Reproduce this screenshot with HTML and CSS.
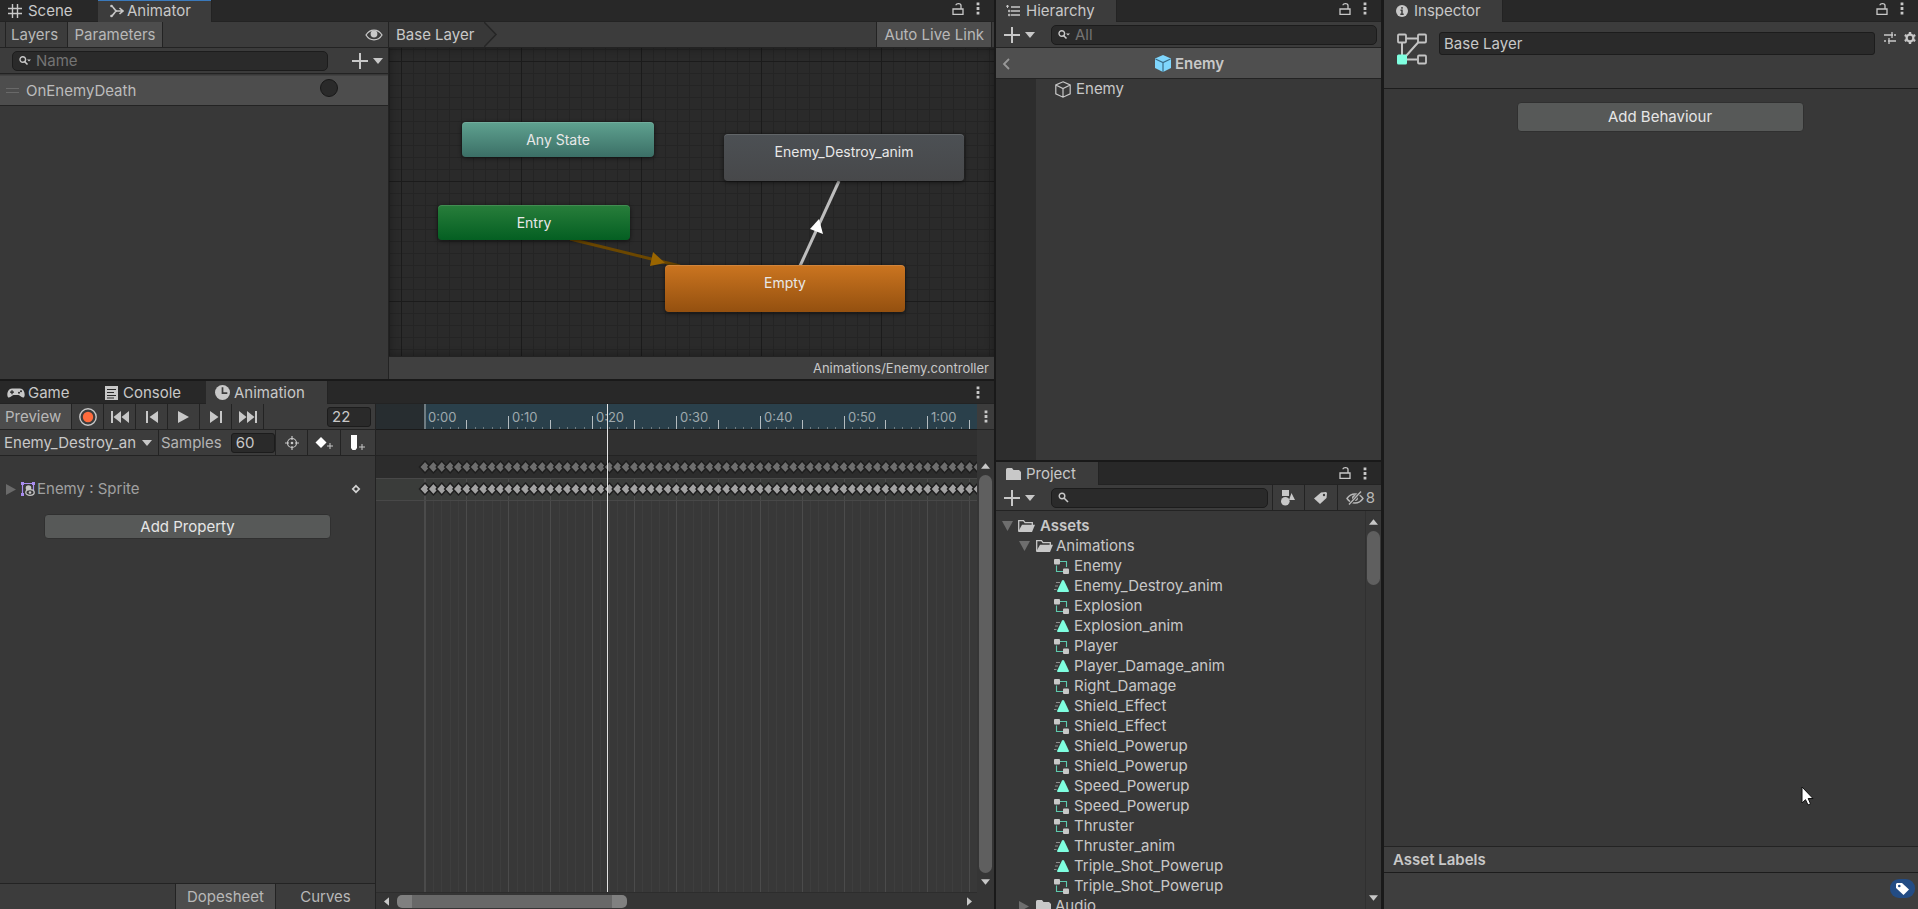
FILE: index.html
```html
<!DOCTYPE html>
<html lang="en">
<head>
  <meta charset="UTF-8" />
  <meta name="viewport" content="width=device-width, initial-scale=1.0"/>
  <title>Animator - Base Layer</title>
  <link rel="stylesheet" href="styles.css">
</head>
<body>
<svg class="defs" width="0" height="0">
  <symbol id="i-grid" viewBox="0 0 14 14"><path d="M4.5 0v14M9.5 0v14M0 4.5h14M0 9.5h14" stroke="currentColor" stroke-width="1.4" fill="none"/></symbol>
  <symbol id="i-animator" viewBox="0 0 14 14"><path d="M1 2c3 0 3 5 6 5h5M1 12c3 0 3-5 6-5M9.5 4l3.500 3-3.500 3" stroke="currentColor" stroke-width="1.600" fill="none"/><circle cx="1.500" cy="2" r="1.300" fill="currentColor"/><circle cx="1.500" cy="12" r="1.300" fill="currentColor"/></symbol>
  <symbol id="i-lock" viewBox="0 0 12 14"><path d="M1 7h10v5.300H1zM9 7V3.500C9 1 4 1 4 3.300" stroke="currentColor" stroke-width="1.300" fill="none"/></symbol>
  <symbol id="i-dots" viewBox="0 0 4 14"><path d="M.5.5h3v3h-3zM.5 5.500h3v3h-3zM.5 10.500h3v3h-3z" fill="currentColor"/></symbol>
  <symbol id="i-eye" viewBox="0 0 18 12"><path d="M1 6c4-6.500 12-6.500 16 0-4 6.500-12 6.500-16 0z" stroke="currentColor" stroke-width="1.300" fill="none"/><circle cx="9" cy="5" r="3.400" fill="currentColor"/></symbol>
  <symbol id="i-search" viewBox="0 0 12 12"><circle cx="4" cy="4" r="2.800" stroke="currentColor" stroke-width="1.400" fill="none"/><path d="M6 6l4 4" stroke="currentColor" stroke-width="1.600"/></symbol>
  <symbol id="i-search-menu" viewBox="0 0 12 12"><circle cx="3.800" cy="4.500" r="2.800" stroke="currentColor" stroke-width="1.400" fill="none"/><path d="M5.500 6.500l3 3" stroke="currentColor" stroke-width="1.600"/><path d="M8 4.500h4l-2 2z" fill="currentColor"/></symbol>
  <symbol id="i-plus" viewBox="0 0 16 16"><path d="M8 0v16M0 8h16" stroke="currentColor" stroke-width="2"/></symbol>
  <symbol id="i-down" viewBox="0 0 10 6"><path d="M0 0h10L5 6z" fill="currentColor"/></symbol>
  <symbol id="i-up" viewBox="0 0 10 6"><path d="M0 6h10L5 0z" fill="currentColor"/></symbol>
  <symbol id="i-left" viewBox="0 0 6 10"><path d="M6 0v10L0 5z" fill="currentColor"/></symbol>
  <symbol id="i-right" viewBox="0 0 6 10"><path d="M0 0v10l6-5z" fill="currentColor"/></symbol>
  <symbol id="i-unfolded" viewBox="0 0 11 10"><path d="M0 0h11L5.500 10z" fill="currentColor"/></symbol>
  <symbol id="i-folded" viewBox="0 0 10 11"><path d="M0 0v11l10-5.500z" fill="currentColor"/></symbol>
  <symbol id="i-game" viewBox="0 0 18 12"><path d="M5 1.500h8c5 0 6 9 3 9-2 0-3-2.500-4.500-2.500h-5C5 8 4 10.500 2 10.500c-3 0-2-9 3-9z" fill="currentColor"/><path d="M5 3.200v4M3 5.200h4" stroke="#282828" stroke-width="1.300"/><circle cx="12" cy="5.800" r="1" fill="#282828"/><circle cx="14" cy="4.200" r="1" fill="#282828"/></symbol>
  <symbol id="i-console" viewBox="0 0 13 14"><path d="M0 0h13v14H0z" fill="currentColor"/><path d="M2 3.500h9M2 6.500h7M2 9.500h9M2 12h7" stroke="#282828" stroke-width="1.200"/></symbol>
  <symbol id="i-clock" viewBox="0 0 14 14"><circle cx="7" cy="7" r="7" fill="currentColor"/><path d="M7 2v5.500h4.500" stroke="#3c3c3c" stroke-width="1.600" fill="none"/></symbol>
  <symbol id="i-hierarchy" viewBox="0 0 14 12"><path d="M5 2h9M5 6h9M5 10h9" stroke="currentColor" stroke-width="1.400"/><path d="M0 1.200h3M1.500 0v3M2.500 5.300h1.400v1.400H2.500zM2.500 9.300h1.400v1.400H2.500z" stroke="currentColor" stroke-width="1" fill="none"/></symbol>
  <symbol id="i-info" viewBox="0 0 12 12"><circle cx="6" cy="6" r="6" fill="currentColor"/><path d="M6 2v1.800M4.500 5.200H6V9M4.300 9.200h3.400" stroke="#3c3c3c" stroke-width="1.500" fill="none"/></symbol>
  <symbol id="i-first" viewBox="0 0 18 12"><path d="M0 0h2v12H0zM10 0v12L2.500 6zM18 0v12l-7.500-6z" fill="currentColor"/></symbol>
  <symbol id="i-prev" viewBox="0 0 12 12"><path d="M0 0h2v12H0zM12 0v12L3.500 6z" fill="currentColor"/></symbol>
  <symbol id="i-play" viewBox="0 0 11 12"><path d="M0 0v12l11-6z" fill="currentColor"/></symbol>
  <symbol id="i-next" viewBox="0 0 12 12"><path d="M10 0h2v12h-2zM0 0v12l8.500-6z" fill="currentColor"/></symbol>
  <symbol id="i-last" viewBox="0 0 18 12"><path d="M16 0h2v12h-2zM8 0v12l7.500-6zM0 0v12l7.500-6z" fill="currentColor"/></symbol>
  <symbol id="i-record" viewBox="0 0 18 18"><circle cx="9" cy="9" r="8.200" stroke="#c8c8c8" stroke-width="1.400" fill="none"/><circle cx="9" cy="9" r="5.200" fill="#ff6b3c"/></symbol>
  <symbol id="i-target" viewBox="0 0 14 14"><circle cx="7" cy="7" r="4.500" stroke="currentColor" stroke-width="1.200" fill="none"/><circle cx="7" cy="7" r="1.300" fill="currentColor"/><path d="M7 0v4M7 10v4M0 7h4M10 7h4" stroke="currentColor" stroke-width="1.200"/></symbol>
  <symbol id="i-addkey" viewBox="0 0 18 16"><path d="M6 2l5.500 5.500L6 13 .5 7.500z" fill="#fff"/><path d="M15 8v6M12 11h6" stroke="currentColor" stroke-width="1"/></symbol>
  <symbol id="i-addevent" viewBox="0 0 16 18"><path d="M1 1h6v13l-1.500 2h-3L1 14z" fill="#fff"/><path d="M12 10v6M9 13h6" stroke="currentColor" stroke-width="1"/></symbol>
  <symbol id="i-sprite" viewBox="0 0 14 14"><path d="M1.500 12V1.500h11V12" stroke="#a98df0" stroke-width="1.200" fill="none"/><path d="M0 0h3v3H0zM11 0h3v3h-3zM0 11h3v3H0z" fill="#a98df0"/><circle cx="7.500" cy="6" r="2.800" fill="#c4c4c4"/><ellipse cx="9" cy="10.500" rx="4.200" ry="2.800" stroke="#c4c4c4" stroke-width="1.300" fill="#383838"/><circle cx="9" cy="10.500" r="1.300" fill="#c4c4c4"/></symbol>
  <symbol id="i-key" viewBox="0 0 10 10"><path d="M5 1.800L8.200 5 5 8.200 1.800 5z" stroke="#d2d2d2" stroke-width="1.700" fill="#333"/></symbol>
  <symbol id="i-prefab" viewBox="0 0 16 17"><path d="M8 0l8 3.500v9.500L8 17l-8-4V3.500z" fill="#7fd6fd"/><path d="M.5 4L8 7.500 15.500 4M8 7.500V17" stroke="#3a6c88" stroke-width="1.200" fill="none"/></symbol>
  <symbol id="i-cube" viewBox="0 0 16 17"><path d="M8 .8l7.200 3.200v8.800L8 16.200.8 12.800V4zM.8 4L8 7.500 15.200 4M8 7.500v8.700" stroke="currentColor" stroke-width="1.200" fill="none"/></symbol>
  <symbol id="i-back" viewBox="0 0 8 12"><path d="M7 1L2 6l5 5" stroke="currentColor" stroke-width="1.800" fill="none"/></symbol>
  <symbol id="i-folder" viewBox="0 0 15 12"><path d="M0 1.500Q0 0 1.500 0H6l1.500 2H13l2 2v8H0z" fill="currentColor"/></symbol>
  <symbol id="i-open" viewBox="0 0 17 12"><path d="M.7 11V.7h4.800l1.500 2h7.300V5" stroke="currentColor" stroke-width="1.300" fill="none"/><path d="M4 4.800h13L14 12H0z" fill="currentColor"/></symbol>
  <symbol id="i-controller" viewBox="0 0 15 15"><path d="M6 2.500h6.500V8M2.500 6.500v6H9" stroke="#5cc8ad" stroke-width="1.100" fill="none"/><rect width="6" height="5.500" rx="1" fill="#c8c8c8"/><rect x="9" y="9.500" width="6" height="5.500" rx="1" fill="#c8c8c8"/></symbol>
  <symbol id="i-clip" viewBox="0 0 15 12"><path d="M9 0l1 .5 5 10.500-.5 1H3.500L3 11 8 .5z" fill="#7fffe0"/><path d="M2 2.500h4M1 6h3M0 9.500h2.500" stroke="#8c8c8c" stroke-width="1.200"/></symbol>
  <symbol id="i-shapes" viewBox="0 0 14 16"><path d="M1 0h7v6H1zM10.500 3L14 10H8z" fill="currentColor"/><circle cx="4.300" cy="11.300" r="4.300" fill="currentColor"/></symbol>
  <symbol id="i-tag" viewBox="0 0 13 12"><path d="M7 .5L12 0l1 1-.5 5L6 12 0 6.500z" fill="currentColor"/><circle cx="10" cy="3" r="1.200" fill="#3c3c3c"/></symbol>
  <symbol id="i-label" viewBox="0 0 13 12"><path d="M0 1l1-1h5l7 6.500L7.500 12 0 5z" fill="#fff"/><circle cx="3.300" cy="3" r="1.300" fill="#234c84"/></symbol>
  <symbol id="i-hidden" viewBox="0 0 18 14"><path d="M1 7.500c4-6 12-6 16 0-4 6-12 6-16 0z" stroke="currentColor" stroke-width="1.400" fill="none"/><circle cx="9" cy="7" r="3" fill="currentColor"/><path d="M3.500 13.500L15 .5" stroke="#3c3c3c" stroke-width="3"/><path d="M3 13.500L15 .5" stroke="currentColor" stroke-width="1.300"/></symbol>
  <symbol id="i-state" viewBox="0 0 30 32"><path d="M5 9v14M9 5.500h12M8.500 23.500L21.500 9M10 26.500h10" stroke="#c4c4c4" stroke-width="2"/><rect x="1" y="1.500" width="8" height="8" rx="1" stroke="#c4c4c4" stroke-width="1.800" fill="#3c3c3c"/><rect x="21" y="1.500" width="8" height="8" rx="1" stroke="#c4c4c4" stroke-width="1.800" fill="#3c3c3c"/><rect x="21" y="22.500" width="8" height="8" rx="1" stroke="#c4c4c4" stroke-width="1.800" fill="#3c3c3c"/><rect y="21.500" width="10" height="10" rx="1.500" fill="#7fffe0"/></symbol>
  <symbol id="i-preset" viewBox="0 0 12 12"><path d="M0 3h9M10 3h2M8 0v6M0 9h2M4 9h8M5 6v6" stroke="currentColor" stroke-width="1.300"/></symbol>
  <symbol id="i-gear" viewBox="0 0 12 12"><circle cx="6" cy="6" r="3.400" stroke="currentColor" stroke-width="2.200" fill="none"/><path d="M6 0v2M6 10v2M.8 3l1.700 1M9.500 8l1.700 1M.8 9l1.700-1M9.500 4l1.700-1" stroke="currentColor" stroke-width="2.400"/></symbol>
</svg>

<div class="editor">
  <div class="col-left">
    <!-- Animator -->
    <section class="panel animator">
      <nav class="tabs">
        <button class="tab tab-scene"><svg width="14" height="14"><use href="#i-grid"/></svg>Scene</button>
        <button class="tab tab-animator active focused"><svg width="14" height="14"><use href="#i-animator"/></svg>Animator</button>
        <div class="tab-tools"><svg width="12" height="14"><use href="#i-lock"/></svg><svg width="4" height="13"><use href="#i-dots"/></svg></div>
      </nav>
      <div class="animator-body">
        <div class="params">
          <div class="toolbar">
            <button class="tool layers">Layers</button>
            <button class="tool on">Parameters</button>
            <svg class="eye" width="18" height="12"><use href="#i-eye"/></svg>
          </div>
          <div class="toolbar search-row">
            <label class="search"><svg width="12" height="12"><use href="#i-search-menu"/></svg><input type="text" placeholder="Name" aria-label="Name"></label>
            <button class="add" aria-label="Add parameter"><svg width="16" height="16"><use href="#i-plus"/></svg><svg width="10" height="6"><use href="#i-down"/></svg></button>
          </div>
          <div class="param">
            <span class="grip"></span>
            <label for="death">OnEnemyDeath</label>
            <input type="radio" id="death" class="trigger">
          </div>
        </div>
        <div class="graph">
          <div class="toolbar graph-bar">
            <a class="crumb" href="#">Base Layer</a>
            <svg class="crumb-end" width="14" height="25"><path d="M0 0L12 12.500 0 25z" fill="#383838"/><path d="M0 0l12 12.500L0 25" stroke="#262626" stroke-width="1.500" fill="none"/></svg>
            <button class="tool on live">Auto Live Link</button>
          </div>
          <div class="canvas">
            <svg class="wires" width="605" height="308">
              <path d="M181 191L291 218" stroke="#6b4700" stroke-width="3"/>
              <path d="M264 204l12 11-15 3z" fill="#9a6500"/>
              <path d="M411 218l39-85" stroke="#bdbdbd" stroke-width="3"/>
              <path d="M430 171l-9 10 13 5z" fill="#fff"/>
            </svg>
            <div class="node small any">Any State</div>
            <div class="node small entry">Entry</div>
            <div class="node destroy">Enemy_Destroy_anim</div>
            <div class="node empty">Empty</div>
          </div>
          <div class="graph-foot">Animations/Enemy.controller</div>
        </div>
      </div>
    </section>

    <!-- Animation -->
    <section class="panel animation">
      <nav class="tabs tall">
        <button class="tab tab-game"><svg width="18" height="12"><use href="#i-game"/></svg>Game</button>
        <button class="tab tab-console"><svg width="13" height="14"><use href="#i-console"/></svg>Console</button>
        <button class="tab tab-animation active"><svg width="15" height="15"><use href="#i-clock"/></svg>Animation</button>
        <div class="tab-tools"><svg width="4" height="13"><use href="#i-dots"/></svg></div>
      </nav>
      <div class="animation-body">
        <div class="props">
          <div class="toolbar playback">
            <button class="tool on preview">Preview</button>
            <button class="tool icon" aria-label="Record"><svg width="18" height="18"><use href="#i-record"/></svg></button>
            <button class="tool icon" aria-label="First key"><svg width="18" height="12"><use href="#i-first"/></svg></button>
            <button class="tool icon" aria-label="Previous key"><svg width="12" height="12"><use href="#i-prev"/></svg></button>
            <button class="tool icon" aria-label="Play"><svg width="11" height="12"><use href="#i-play"/></svg></button>
            <button class="tool icon" aria-label="Next key"><svg width="12" height="12"><use href="#i-next"/></svg></button>
            <button class="tool icon" aria-label="Last key"><svg width="18" height="12"><use href="#i-last"/></svg></button>
            <input class="num frame" type="text" value="22" aria-label="Frame">
          </div>
          <div class="toolbar">
            <div class="clip"><select aria-label="Clip"><option>Enemy_Destroy_an</option></select><svg width="10" height="6"><use href="#i-down"/></svg></div>
            <label class="samples" for="samples">Samples</label>
            <input class="num" id="samples" type="text" value="60">
            <button class="tool icon first" aria-label="Filter by selection"><svg width="14" height="14"><use href="#i-target"/></svg></button>
            <button class="tool icon" aria-label="Add keyframe"><svg width="18" height="16"><use href="#i-addkey"/></svg></button>
            <button class="tool icon last" aria-label="Add event"><svg width="16" height="18"><use href="#i-addevent"/></svg></button>
          </div>
          <div class="prop">
            <svg class="fold" width="10" height="11"><use href="#i-folded"/></svg>
            <svg width="14" height="14"><use href="#i-sprite"/></svg>
            <span>Enemy : Sprite</span>
            <svg class="key" width="10" height="10"><use href="#i-key"/></svg>
          </div>
          <button class="btn add-prop">Add Property</button>
          <div class="modes">
            <button class="tool on">Dopesheet</button>
            <button class="tool">Curves</button>
          </div>
        </div>
        <div class="timeline">
          <svg id="ruler" class="ruler"></svg>
          <div class="events"></div>
          <svg id="summary" class="keys summary"></svg>
          <svg id="keys" class="keys track"></svg>
          <svg id="lines" class="lines"></svg>
          <div class="playhead"></div>
          <div class="hscroll">
            <svg width="5" height="9"><use href="#i-left"/></svg>
            <div class="hbar"><div class="hthumb"></div></div>
            <svg width="5" height="9"><use href="#i-right"/></svg>
          </div>
        </div>
        <div class="vscroll">
          <div class="vmenu"><svg width="4" height="13"><use href="#i-dots"/></svg></div>
          <svg width="9" height="6"><use href="#i-up"/></svg>
          <div class="vthumb"></div>
          <svg width="9" height="6"><use href="#i-down"/></svg>
        </div>
      </div>
    </section>
  </div>

  <div class="col-mid">
    <!-- Hierarchy -->
    <section class="panel hierarchy">
      <nav class="tabs">
        <button class="tab tab-hierarchy active"><svg width="14" height="12"><use href="#i-hierarchy"/></svg>Hierarchy</button>
        <div class="tab-tools"><svg width="12" height="14"><use href="#i-lock"/></svg><svg width="4" height="13"><use href="#i-dots"/></svg></div>
      </nav>
      <div class="toolbar">
        <button class="add" aria-label="Create"><svg width="16" height="16"><use href="#i-plus"/></svg><svg width="10" height="6"><use href="#i-down"/></svg></button>
        <label class="search"><svg width="12" height="12"><use href="#i-search-menu"/></svg><input type="text" placeholder="All" aria-label="Search hierarchy"></label>
      </div>
      <div class="prefab-head">
        <svg class="back" width="8" height="12"><use href="#i-back"/></svg>
        <svg width="16" height="17"><use href="#i-prefab"/></svg>
        <b>Enemy</b>
      </div>
      <div class="scene-tree">
        <div class="gutter"></div>
        <div class="object"><svg width="16" height="17"><use href="#i-cube"/></svg>Enemy</div>
      </div>
    </section>

    <!-- Project -->
    <section class="panel project">
      <nav class="tabs tall">
        <button class="tab tab-project active"><svg width="15" height="12"><use href="#i-folder"/></svg>Project</button>
        <div class="tab-tools"><svg width="12" height="14"><use href="#i-lock"/></svg><svg width="4" height="13"><use href="#i-dots"/></svg></div>
      </nav>
      <div class="toolbar project-bar">
        <button class="add" aria-label="Create asset"><svg width="16" height="16"><use href="#i-plus"/></svg><svg width="10" height="6"><use href="#i-down"/></svg></button>
        <label class="search"><svg width="12" height="12"><use href="#i-search"/></svg><input type="text" aria-label="Search assets"></label>
        <button class="tool icon first" aria-label="Filter by type"><svg width="14" height="16"><use href="#i-shapes"/></svg></button>
        <button class="tool icon" aria-label="Filter by label"><svg width="13" height="12"><use href="#i-tag"/></svg></button>
        <button class="tool hidden-count"><svg width="18" height="14"><use href="#i-hidden"/></svg>8</button>
      </div>
      <div class="assets">
        <ul class="tree">
          <li class="root"><svg class="fold" width="11" height="10"><use href="#i-unfolded"/></svg><svg width="17" height="12"><use href="#i-open"/></svg>Assets</li>
          <li class="dir"><svg class="fold" width="11" height="10"><use href="#i-unfolded"/></svg><svg width="17" height="12"><use href="#i-open"/></svg>Animations</li>
          <li><svg width="15" height="15"><use href="#i-controller"/></svg>Enemy</li>
          <li><svg width="15" height="12"><use href="#i-clip"/></svg>Enemy_Destroy_anim</li>
          <li><svg width="15" height="15"><use href="#i-controller"/></svg>Explosion</li>
          <li><svg width="15" height="12"><use href="#i-clip"/></svg>Explosion_anim</li>
          <li><svg width="15" height="15"><use href="#i-controller"/></svg>Player</li>
          <li><svg width="15" height="12"><use href="#i-clip"/></svg>Player_Damage_anim</li>
          <li><svg width="15" height="15"><use href="#i-controller"/></svg>Right_Damage</li>
          <li><svg width="15" height="12"><use href="#i-clip"/></svg>Shield_Effect</li>
          <li><svg width="15" height="15"><use href="#i-controller"/></svg>Shield_Effect</li>
          <li><svg width="15" height="12"><use href="#i-clip"/></svg>Shield_Powerup</li>
          <li><svg width="15" height="15"><use href="#i-controller"/></svg>Shield_Powerup</li>
          <li><svg width="15" height="12"><use href="#i-clip"/></svg>Speed_Powerup</li>
          <li><svg width="15" height="15"><use href="#i-controller"/></svg>Speed_Powerup</li>
          <li><svg width="15" height="15"><use href="#i-controller"/></svg>Thruster</li>
          <li><svg width="15" height="12"><use href="#i-clip"/></svg>Thruster_anim</li>
          <li><svg width="15" height="12"><use href="#i-clip"/></svg>Triple_Shot_Powerup</li>
          <li><svg width="15" height="15"><use href="#i-controller"/></svg>Triple_Shot_Powerup</li>
          <li class="dir closed"><svg class="fold" width="10" height="11"><use href="#i-folded"/></svg><svg width="15" height="12"><use href="#i-folder"/></svg>Audio</li>
        </ul>
        <div class="asset-scroll">
          <svg width="9" height="6"><use href="#i-up"/></svg>
          <div class="asset-thumb"></div>
          <svg width="9" height="6"><use href="#i-down"/></svg>
        </div>
      </div>
    </section>
  </div>

  <!-- Inspector -->
  <section class="panel inspector">
    <nav class="tabs">
      <button class="tab tab-inspector active"><svg width="12" height="12"><use href="#i-info"/></svg>Inspector</button>
      <div class="tab-tools"><svg width="12" height="14"><use href="#i-lock"/></svg><svg width="4" height="13"><use href="#i-dots"/></svg></div>
    </nav>
    <div class="inspector-head">
      <svg width="30" height="32"><use href="#i-state"/></svg>
      <input class="name" type="text" value="Base Layer" aria-label="Layer name">
      <svg class="preset" width="12" height="12"><use href="#i-preset"/></svg>
      <svg class="gear" width="12" height="12"><use href="#i-gear"/></svg>
    </div>
    <div class="inspector-body"><button class="btn add-behaviour">Add Behaviour</button></div>
    <div class="labels-head">Asset Labels</div>
    <div class="labels"><button class="badge" aria-label="Edit labels"><svg width="13" height="12"><use href="#i-label"/></svg></button></div>
  </section>
</div>
<svg class="cursor" width="13" height="20"><path d="M1 1v16l3.500-3.300L7 19l2.500-1.200L7.200 12.500H12z" fill="#fff" stroke="#111" stroke-width="1"/></svg>
<script src="script.js"></script>
</body>
</html>
```

FILE: styles.css
```css
:root {
  --bg: #383838;
  --bar: #3c3c3c;
  --tabs: #282828;
  --line: #232323;
  --field: #2a2a2a;
  --on: #4d4d4d;
  --text: #c8c8c8;
  --muted: #a0a0a0;
}
* { box-sizing: border-box; }
body {
  margin: 0; background: #191919; color: var(--text);
  font: 15px/20px Inter, "Liberation Sans", sans-serif;
  overflow: hidden;
}
button, input, select {
  font: inherit; color: inherit; background: none;
  border: 0; margin: 0; padding: 0; outline: 0;
}
svg { flex: none; display: block; }
.defs { position: absolute; }

.editor {
  display: grid; grid-template-columns: 994fr 385fr 535fr;
  height: 100vh; column-gap: 2px;
}
.col-left { display: grid; grid-template-rows: 379fr 528fr; row-gap: 2px; min-width: 0; min-height: 0; }
.col-mid { display: grid; grid-template-rows: 460fr 447fr; row-gap: 2px; min-width: 0; min-height: 0; }
.panel { display: flex; flex-direction: column; background: var(--bg); min-width: 0; min-height: 0; overflow: hidden; }
.inspector { border-left: 1px solid #191919; }

/* tabs */
.tabs { display: flex; flex: none; height: 22px; background: var(--tabs); border-bottom: 1px solid var(--line); }
.tabs.tall { height: 23px; }
.tab { display: flex; align-items: center; gap: 6px; height: 22px; padding: 0 21px 0 10px; }
.tabs.tall .tab { height: 23px; }
.tab.active { background: var(--bar); border-right: 1px solid var(--line); }
.tab.focused { box-shadow: inset 0 1px #3a79bb; }
.tab-scene { width: 98px; padding-left: 8px; }
.tab-animator { width: 114px; padding-left: 12px; gap: 3px; }
.tab-game { padding-left: 7px; gap: 3px; width: 105px; }
.tab-console { width: 101px; padding-left: 0; gap: 5px; }
.tab-animation { width: 122px; padding-left: 9px; gap: 4px; }
.tab-hierarchy { width: 121px; }
.tab-project { width: 103px; gap: 5px; }
.tab-inspector { width: 119px; padding-left: 12px; }
.tab-tools { display: flex; align-items: center; gap: 12px; margin-left: auto; padding: 0 14px 4px 0; }
.tall .tab-tools { padding-bottom: 0; }

/* toolbars */
.toolbar { display: flex; align-items: center; flex: none; height: 26px; background: var(--bar); border-bottom: 1px solid var(--line); }
.tool { height: 25px; padding: 0 6px; border-right: 1px solid var(--line); white-space: nowrap; color: #b8b8b8; }
.tool.on { background: var(--on); }
.tool.icon { width: 33px; padding: 0; display: flex; align-items: center; justify-content: center; color: var(--text); }
.playback .tool.icon { width: 32px; }
.tool.icon.first { border-left: 1px solid var(--line); margin-left: auto; }
.tool.icon.last { border-right: 0; width: 34px; }
.search {
  display: flex; align-items: center; gap: 5px; flex: 1; min-width: 0; height: 20px; padding: 0 6px;
  background: var(--field); border: 1px solid #1c1c1c; border-radius: 5px;
}
.search input { flex: 1; min-width: 0; }
.search input::placeholder { color: #747474; opacity: 1; }
.add { display: flex; align-items: center; gap: 5px; }
.num { width: 44px; height: 20px; padding: 0 4px; background: var(--field); border: 1px solid #1c1c1c; border-radius: 3px; }
.btn { background: #575958; color: #e6e6e6; border: 1px solid #303030; border-radius: 4px; }

/* animator */
.animator-body { display: flex; flex: 1; min-height: 0; }
.params { flex: 0 0 389px; border-right: 1px solid var(--line); }
.layers { width: 63px; padding-left: 5px; border-left: 1px solid var(--line); margin-left: 5px; text-align: left; }
.layers + .tool { width: 95px; }
.eye { margin: 0 5px 0 auto; }
.search-row { padding: 0 5px 0 12px; gap: 24px; }
.param {
  display: flex; align-items: center; height: 31px; margin-top: 1px; padding: 0 50px 0 6px;
  background: var(--on); border-top: 1px solid #424242; border-bottom: 1px solid var(--line);
}
.grip { width: 13px; height: 5px; border: solid #696969; border-width: 1px 0; margin-right: 7px; }
.param label { color: #bcbcbc; }
.trigger { appearance: none; width: 18px; height: 18px; border-radius: 50%; background: var(--field); border: 1px solid #181818; margin: 0 0 5px auto; }
.graph { flex: 1; display: flex; flex-direction: column; min-width: 0; }
.crumb { display: flex; align-items: center; height: 25px; padding: 0 10px 0 7px; background: #383838; color: inherit; text-decoration: none; }
.live { margin: 0 2px 0 auto; padding: 0 7px; border-left: 1px solid var(--line); }
.canvas {
  position: relative; flex: 1; overflow: hidden; background-color: #2a2a2a;
  background-image:
    linear-gradient(90deg, #1b1b1b 1px, transparent 1px),
    linear-gradient(#1b1b1b 1px, transparent 1px),
    linear-gradient(90deg, #242424 1px, transparent 1px),
    linear-gradient(#242424 1px, transparent 1px);
  background-size: 120px 120px, 120px 120px, 12px 12px, 12px 12px;
  background-position: 12px 13px;
  box-shadow: inset 0 0 10px rgba(0,0,0,0.35);
}
.wires { position: absolute; left: 0; top: 0; }
.node {
  position: absolute; width: 240px; height: 47px; padding-top: 8px; border-radius: 4px;
  font-size: 14px; text-align: center; color: #e8e8e8;
  box-shadow: 0 1px 4px rgba(0,0,0,0.6), inset 0 1px rgba(255,255,255,0.12);
}
.node.small { width: 192px; height: 35px; }
.any { left: 73px; top: 74px; background: linear-gradient(#5fa290, #3b6f66); }
.entry { left: 49px; top: 157px; background: linear-gradient(#287e3b, #045f22); }
.destroy { left: 335px; top: 86px; background: linear-gradient(#4c5054, #47484a); }
.empty { left: 276px; top: 217px; background: linear-gradient(#cb7520, #94500f); }
.graph-foot { flex: none; height: 23px; padding: 1px 5px; background: #404040; border-top: 1px solid var(--line); font-size: 13px; text-align: right; }

/* animation */
.animation-body { display: flex; flex: 1; min-height: 0; }
.props { flex: 0 0 376px; display: flex; flex-direction: column; border-right: 1px solid var(--line); }
.preview { width: 72px; padding: 0 5px; text-align: left; }
.frame { margin: 0 4px 0 auto; }
.clip { display: flex; align-items: center; width: 159px; height: 25px; padding: 0 6px 0 4px; border-right: 1px solid var(--line); }
.clip select { appearance: none; flex: 1; min-width: 0; }
.samples { margin: 0 9px 0 2px; color: #b4b4b4; }
.prop { display: flex; align-items: center; height: 22px; margin-top: 22px; padding: 0 14px 0 6px; color: var(--muted); }
.prop .fold { margin-right: 5px; color: #6a6a6a; }
.prop span { margin-left: 2px; }
.prop .key { margin-left: auto; }
.add-prop { flex: none; height: 25px; margin: 14px 44px 0; }
.modes { display: flex; justify-content: flex-end; flex: none; height: 26px; margin-top: auto; background: var(--bar); border-top: 1px solid var(--line); }
.modes .tool { width: 100px; border-width: 0 0 0 1px; border-style: solid; border-color: var(--line); }

.timeline { position: relative; flex: 1; display: flex; flex-direction: column; min-width: 0; }
.ruler { width: 100%; height: 26px; background: linear-gradient(90deg, #272d30 49px, #2a404b 49px); border-bottom: 1px solid #1a1a1a; font-size: 13px; }
.events { height: 26px; background: #303030; border-bottom: 1px solid var(--line); }
.keys { width: 100%; height: 22px; }
.summary { background: #2c2c2c; }
.track { height: 23px; background: #3a3c3a; border: solid #484848; border-width: 1px 0; }
.lines { width: 100%; flex: 1; min-height: 0; }
.playhead { position: absolute; left: 231px; top: 0; bottom: 17px; width: 1px; background: #e4e4e4; }
.hscroll { display: flex; align-items: center; flex: none; height: 17px; padding: 0 5px 0 8px; gap: 8px; background: #353535; border-top: 1px solid #2d2d2d; }
.hbar { flex: 1; }
.hthumb { width: 41%; height: 13px; border-radius: 5px; background: #686868; border: solid #808080; border-width: 0 15px; }
.vscroll { flex: none; width: 17px; display: flex; flex-direction: column; align-items: center; background: #353535; padding-bottom: 24px; }
.vmenu { align-self: stretch; display: flex; align-items: center; justify-content: center; height: 26px; margin-bottom: 33px; background: var(--bar); border-bottom: 1px solid var(--line); }
.vthumb { flex: 1; width: 13px; margin: 6px 0; border-radius: 7px; background: #5f5f5f; }

/* hierarchy */
.col-mid .add { margin-left: 8px; width: 47px; }
.hierarchy .search, .project .search { margin-right: 4px; }
.prefab-head {
  position: relative; display: flex; align-items: center; justify-content: center; gap: 4px;
  flex: none; height: 31px; padding: 1px 0 0 2px; background: #4f4f4f; border-bottom: 1px solid var(--line);
}
.back { position: absolute; left: 6px; color: #999; }
b, .root { font-weight: 600; }
.scene-tree { flex: 1; display: flex; }
.gutter { width: 40px; background: #2d2d2d; }
.object { display: flex; align-items: center; gap: 5px; height: 20px; padding-left: 19px; }

/* project */
.hidden-count { display: flex; align-items: center; gap: 2px; border-right: 0; padding: 0 6px 0 8px; }
.assets { flex: 1; display: flex; min-height: 0; }
.tree { flex: 1; margin: 0; padding: 5px 0 0; list-style: none; overflow: hidden; }
.tree li { display: flex; align-items: center; gap: 5px; height: 20px; padding-left: 58px; white-space: nowrap; }
.tree .root { padding-left: 6px; }
.tree .dir { padding-left: 23px; gap: 3px; }
.tree .dir .fold { margin-right: 3px; }
.tree .closed { gap: 4px; }
.fold { color: #6e6e6e; }
.asset-scroll { width: 16px; display: flex; flex-direction: column; align-items: center; padding: 8px 0; border-left: 1px solid #303030; }
.asset-thumb { width: 13px; height: 54px; margin: 6px 0 auto; border-radius: 7px; background: #5f5f5f; }

/* inspector */
.inspector-head { display: flex; align-items: flex-start; flex: none; height: 67px; padding: 10px 2px 0 13px; background: var(--bar); border-bottom: 1px solid #1c1c1c; }
.inspector-head > svg:first-child { margin-top: 1px; }
.name { flex: 1; min-width: 0; height: 23px; margin: 0 9px 0 12px; padding: 0 4px; background: var(--field); border: 1px solid #1c1c1c; border-radius: 3px; }
.preset, .gear { margin-top: 22px; align-self: flex-start; }
.inspector-head .preset, .inspector-head .gear { margin-top: 0; }
.gear { margin-left: 8px; }
.inspector-body { flex: 1; display: flex; align-items: flex-start; justify-content: center; padding: 13px 0 0 18px; }
.add-behaviour { width: 287px; height: 30px; }
.labels-head { flex: none; height: 26px; padding: 3px 9px; background: #3e3e3e; border-top: 1px solid var(--line); font-weight: 600; }
.labels { flex: none; height: 37px; padding: 6px 3px; background: #3e3e3e; border-top: 1px solid #1c1c1c; }
.badge { display: flex; align-items: center; justify-content: center; width: 25px; height: 19px; margin-left: auto; border-radius: 9px; background: #234c84; }
.cursor { position: absolute; right: 104px; top: 786px; }
```

FILE: script.js
```js
const START = 49, STEP = 8.38;
const ruler = document.getElementById('ruler');
const lines = document.getElementById('lines');
const summary = document.getElementById('summary');
const keys = document.getElementById('keys');

function diamonds(count, fill, y) {
  let out = '';
  for (let i = 0; i < count; i++) {
    const x = START + i * STEP;
    out += `<path d="M${x} ${y - 6}l5.500 6-5.500 6-5.500-6z" fill="${fill}" stroke="#1e1e1e" stroke-width="1.500"/>`;
  }
  return out;
}

function draw() {
  const width = ruler.clientWidth || ruler.getBoundingClientRect().width;
  const count = Math.ceil((width - START) / STEP) + 1;
  let ticks = '', cols = '';
  for (let i = 0; i < count; i++) {
    const x = Math.floor(START + i * STEP) - (i ? 0 : 1);
    const w = i ? 1 : 2;
    const big = i % 10 === 0, mid = i % 5 === 0;
    const h = i === 0 ? 25 : big ? 13 : mid ? 9 : 2;
    ticks += `<rect x="${x}" y="${25 - h}" width="${w}" height="${h}" fill="${i && mid ? '#b4bcc0' : '#6f7c82'}"/>`;
    // skip a label that would not fit whole
    if (big && x + 34 < width) {
      const label = Math.floor(i / 60) + ':' + String(i % 60).padStart(2, '0');
      ticks += `<text x="${x + 4}" y="18" fill="#9fa9ad">${label}</text>`;
    }
    cols += `<rect x="${x}" y="0" width="${w}" height="2000" fill="${mid ? '#4b4b4b' : '#3e3e3e'}"/>`;
  }
  ruler.innerHTML = ticks;
  lines.innerHTML = cols;
  summary.innerHTML = diamonds(count, '#6e6e6e', 11);
  keys.innerHTML = cols + diamonds(count, '#a2a2a2', 10);
}

draw();
window.addEventListener('resize', draw);
```
